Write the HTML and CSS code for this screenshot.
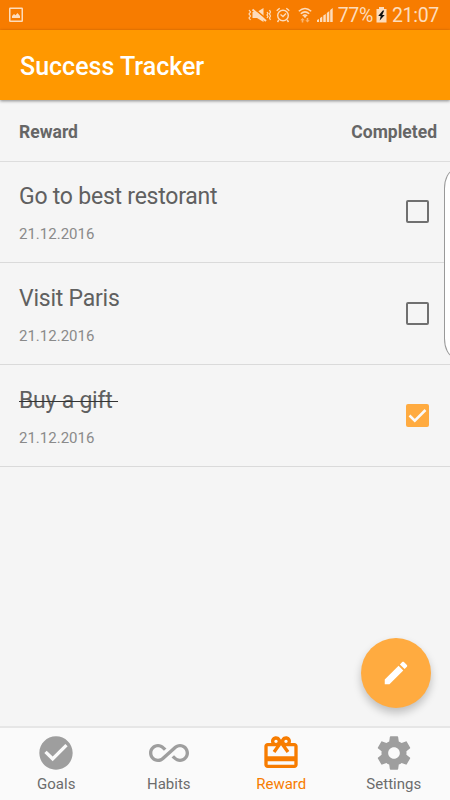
FILE: index.html
```html
<!DOCTYPE html>
<html lang="en">
<head>
<meta charset="utf-8">
<title>Success Tracker</title>
<link rel="stylesheet" href="styles.css">
</head>
<body>
<div class="app">
  <div class="status">
    <svg class="photo" width="14" height="16" viewBox="0 0 14 16"><rect x=".75" y="1.250" width="12.500" height="13" rx=".5" fill="none" stroke="currentColor" stroke-width="1.500"/><path d="M3 11V9l2-2 1.500 1.200L8.500 6l2.500 3v2z" fill="currentColor"/></svg>
    <div class="tray">
      <svg class="mute" width="23" height="16" viewBox="0 0 23 16"><path d="M4.500 5H9l6.500-4v14L9 11H4.500z" fill="currentColor"/><path d="M5.500 1.200l13 11" stroke="#f77c00" stroke-width="1.600"/><path d="M4.500 2.500l13.500 11.500" stroke="currentColor" stroke-width="1.900"/><path d="M1 3l1.500 2L1 7l1.500 2L1 11l1.500 2M19 5l1 1.500L19 8l1 1.500-1 1.500M21.500 3l1 2-1 2 1 2-1 2 1 2" fill="none" stroke="currentColor" stroke-width="1.200"/></svg>
      <svg class="alarm" width="14" height="16" viewBox="0 0 14 16"><circle cx="7" cy="8.500" r="5.300" fill="none" stroke="currentColor" stroke-width="1.400"/><path d="M.7 3.800l3-2.600M13.300 3.800l-3-2.600M2.800 13l-1.300 2M11.200 13l1.300 2M4.500 7.500L7 9.500l3-3" fill="none" stroke="currentColor" stroke-width="1.400"/></svg>
      <svg class="wifi" width="14" height="16" viewBox="0 0 14 16"><path d="M.8 4.300q6.200-5.500 12.400 0M2.800 6.700q4.200-3.700 8.400 0M4.800 9q2.200-2 4.400 0" fill="none" stroke="currentColor" stroke-width="1.500"/><circle cx="7" cy="9.700" r="1.100" fill="currentColor"/><path d="M2.300 13.200L4.500 11l2.200 2.200H5.300v2.300H3.700v-2.300zM7.300 13.200h1.400V11h1.600v2.200h1.400l-2.200 2.300z" fill="currentColor" opacity=".6"/></svg>
      <svg class="signal" width="16" height="16" viewBox="0 0 16 16"><path d="M0 15v-2l2-1v3zM3 15v-4l2.300-1.500V15zM6.300 15V8.500L8.800 7v8zM9.800 15V6l2.500-2v11zM13.200 15V3l2.500-2v14z" fill="currentColor"/></svg>
      <span class="pct">77%</span>
      <svg class="battery" width="11" height="16" viewBox="0 0 11 16"><path d="M3 0h5v2h2.500v13.500H.5V2H3z" fill="currentColor"/><path d="M6.800 3.500L2.200 9h2.500l-1 4.500L8.700 8H6.200l2-4.500z" fill="#111"/></svg>
      <span class="clock">21:07</span>
    </div>
  </div>
  <header class="bar"><h1>Success Tracker</h1></header>
  <main class="content">
    <div class="heads"><span>Reward</span><span>Completed</span></div>
    <div class="row">
      <div><div class="name">Go to best restorant</div><div class="date">21.12.2016</div></div>
      <span class="box"></span>
    </div>
    <div class="row">
      <div><div class="name">Visit Paris</div><div class="date">21.12.2016</div></div>
      <span class="box"></span>
    </div>
    <div class="row">
      <div><div class="name"><span class="done">Buy a gift </span></div><div class="date">21.12.2016</div></div>
      <span class="box checked"><svg width="23" height="23" viewBox="0 0 23 23"><path d="M3.500 11.500l5.300 5.200L19.500 6" fill="none" stroke="#fafafa" stroke-width="2.500"/></svg></span>
    </div>
    <div class="edge"></div>
    <div class="fab"><svg width="30" height="30" viewBox="0 0 24 24"><path d="M3 17.250V21h3.750L17.810 9.940l-3.750-3.750L3 17.250zM20.710 7.040c.39-.39.39-1.020 0-1.410l-2.340-2.340c-.39-.39-1.020-.39-1.410 0l-1.830 1.830 3.750 3.750 1.830-1.830z" fill="#fff"/></svg></div>
  </main>
  <nav class="tabs">
    <div class="tab"><svg viewBox="0 0 24 24"><path d="M12 2C6.480 2 2 6.480 2 12s4.480 10 10 10 10-4.480 10-10S17.520 2 12 2zm-2 15l-5-5 1.410-1.410L10 14.170l7.590-7.590L19 8l-9 9z"/></svg><span>Goals</span></div>
    <div class="tab"><svg viewBox="0 0 24 24"><path d="M18.600 6.620c-1.440 0-2.800.56-3.770 1.530L12 10.660 10.480 12h.01L7.800 14.390c-.64.64-1.490.99-2.400.99-1.870 0-3.390-1.510-3.390-3.380S3.530 8.620 5.400 8.620c.91 0 1.760.35 2.440 1.030l1.130 1 1.510-1.340L9.220 8.200C8.200 7.180 6.840 6.620 5.400 6.620 2.420 6.620 0 9.040 0 12s2.420 5.380 5.400 5.380c1.440 0 2.800-.56 3.770-1.530l2.830-2.500.01.01L13.520 12h-.01l2.690-2.390c.64-.64 1.490-.99 2.400-.99 1.870 0 3.390 1.510 3.390 3.380s-1.520 3.380-3.390 3.380c-.9 0-1.760-.35-2.440-1.030l-1.140-1.010-1.510 1.340 1.270 1.120c1.020 1.010 2.370 1.570 3.820 1.570 2.980 0 5.400-2.410 5.400-5.380s-2.420-5.370-5.400-5.370z"/></svg><span>Habits</span></div>
    <div class="tab active"><svg viewBox="0 0 24 24"><path d="M20 6h-2.180c.11-.31.18-.65.18-1 0-1.660-1.340-3-3-3-1.050 0-1.960.54-2.500 1.350l-.5.67-.5-.68C10.960 2.540 10.050 2 9 2 7.340 2 6 3.340 6 5c0 .35.07.69.18 1H4c-1.110 0-1.990.89-1.990 2L2 19c0 1.110.89 2 2 2h16c1.110 0 2-.89 2-2V8c0-1.110-.89-2-2-2zm-5-2c.55 0 1 .45 1 1s-.45 1-1 1-1-.45-1-1 .45-1 1-1zM9 4c.55 0 1 .45 1 1s-.45 1-1 1-1-.45-1-1 .45-1 1-1zm11 15H4v-2h16v2zm0-5H4V8h5.080L7 10.830 8.620 12 11 8.760l1-1.360 1 1.360L15.380 12 17 10.830 14.920 8H20v6z"/></svg><span>Reward</span></div>
    <div class="tab"><svg viewBox="0 0 24 24"><path d="M19.430 12.980c.04-.32.07-.64.07-.98s-.03-.66-.07-.98l2.110-1.650c.19-.15.24-.42.12-.64l-2-3.460c-.12-.22-.39-.3-.61-.22l-2.490 1c-.52-.4-1.080-.73-1.690-.98l-.38-2.650C14.460 2.180 14.250 2 14 2h-4c-.25 0-.46.18-.49.42l-.38 2.650c-.61.25-1.170.59-1.690.98l-2.490-1c-.23-.09-.49 0-.61.22l-2 3.460c-.13.22-.07.49.12.64l2.110 1.650c-.04.32-.07.65-.07.98s.03.66.07.98l-2.110 1.650c-.19.15-.24.42-.12.64l2 3.460c.12.22.39.3.61.22l2.490-1c.52.4 1.080.73 1.690.98l.38 2.650c.03.24.24.42.49.42h4c.25 0 .46-.18.49-.42l.38-2.650c.61-.25 1.170-.59 1.690-.98l2.490 1c.23.09.49 0 .61-.22l2-3.460c.12-.22.07-.49-.12-.64l-2.110-1.650zM12 15.500c-1.930 0-3.500-1.570-3.500-3.500s1.570-3.500 3.500-3.500 3.500 1.570 3.500 3.500-1.570 3.500-3.500 3.500z"/></svg><span>Settings</span></div>
  </nav>
</div>
</body>
</html>
```
FILE: styles.css
```css
* { box-sizing: border-box; }
body { margin: 0; font-family: Roboto, sans-serif; color: #616161; }
.app { width: 450px; height: 800px; display: flex; flex-direction: column; background: #f5f5f5; overflow: hidden; }
.status { height: 30px; flex: none; background: #f77c00; color: #fddcbc; display: flex; justify-content: space-between; align-items: center; padding: 0 11px 0 9px; }
.status svg { display: block; flex: none; }
.tray { display: flex; align-items: center; font-size: 19.5px; letter-spacing: -.3px; line-height: 30px; }
.mute { margin-right: 5px; }
.alarm { margin-right: 8px; }
.wifi { margin-right: 5px; }
.signal { margin-right: 5px; }
.battery { margin: 0 5px 0 3px; }
.pct, .clock { padding-top: 2px; }
.bar { height: 70px; flex: none; background: #ff9800; display: flex; align-items: center; padding: 4px 20px 0; box-shadow: 0 1px 3px rgba(0,0,0,.45); position: relative; }
h1 { margin: 0; font-size: 25px; line-height: 30px; font-weight: 500; color: #fff; }
.content { flex: 1; position: relative; }
.heads { height: 62px; display: flex; justify-content: space-between; align-items: center; padding: 2px 13px 0 19px; font-size: 17.5px; font-weight: 700; color: #666; border-bottom: 1px solid #ddd; }
.row { height: 102px; display: flex; justify-content: space-between; border-bottom: 1px solid #dadada; padding: 22px 21px 0 19px; }
.row:nth-child(2) { height: 101px; padding-top: 21px; }
.name { font-size: 23px; letter-spacing: -.23px; line-height: 28px; color: #606060; white-space: pre; }
.date { font-size: 15px; line-height: 20px; margin-top: 13px; color: #8a8a8a; }
.done { text-decoration: line-through; text-decoration-thickness: 1px; text-decoration-color: #333; }
.box { width: 23px; height: 23px; margin-top: 17px; border: 2px solid #707070; border-radius: 2px; }
.checked { border: 0; background: #ffab40; }
.checked svg { display: block; }
.edge { position: absolute; right: -14px; top: 70px; width: 20px; height: 187px; background: #fff; border: 1px solid #999; border-radius: 14px / 26px; }
.fab { position: absolute; left: 361px; top: 538px; width: 70px; height: 70px; border-radius: 50%; background: #ffab40; display: flex; align-items: center; justify-content: center; box-shadow: 0 5px 9px rgba(0,0,0,.22); }
.tabs { height: 74px; flex: none; display: grid; grid-template-columns: repeat(4, 1fr); background: #fafafa; border-top: 2px solid #e6e6e6; position: relative; }
.tab { display: flex; flex-direction: column; align-items: center; padding-top: 5px; font-size: 15px; line-height: 20px; color: #6c6c6c; }
.tab svg { width: 40px; height: 40px; fill: #9e9e9e; margin-bottom: 1px; }
.active { color: #f77c00; }
.active svg { fill: #f77c00; }
```
